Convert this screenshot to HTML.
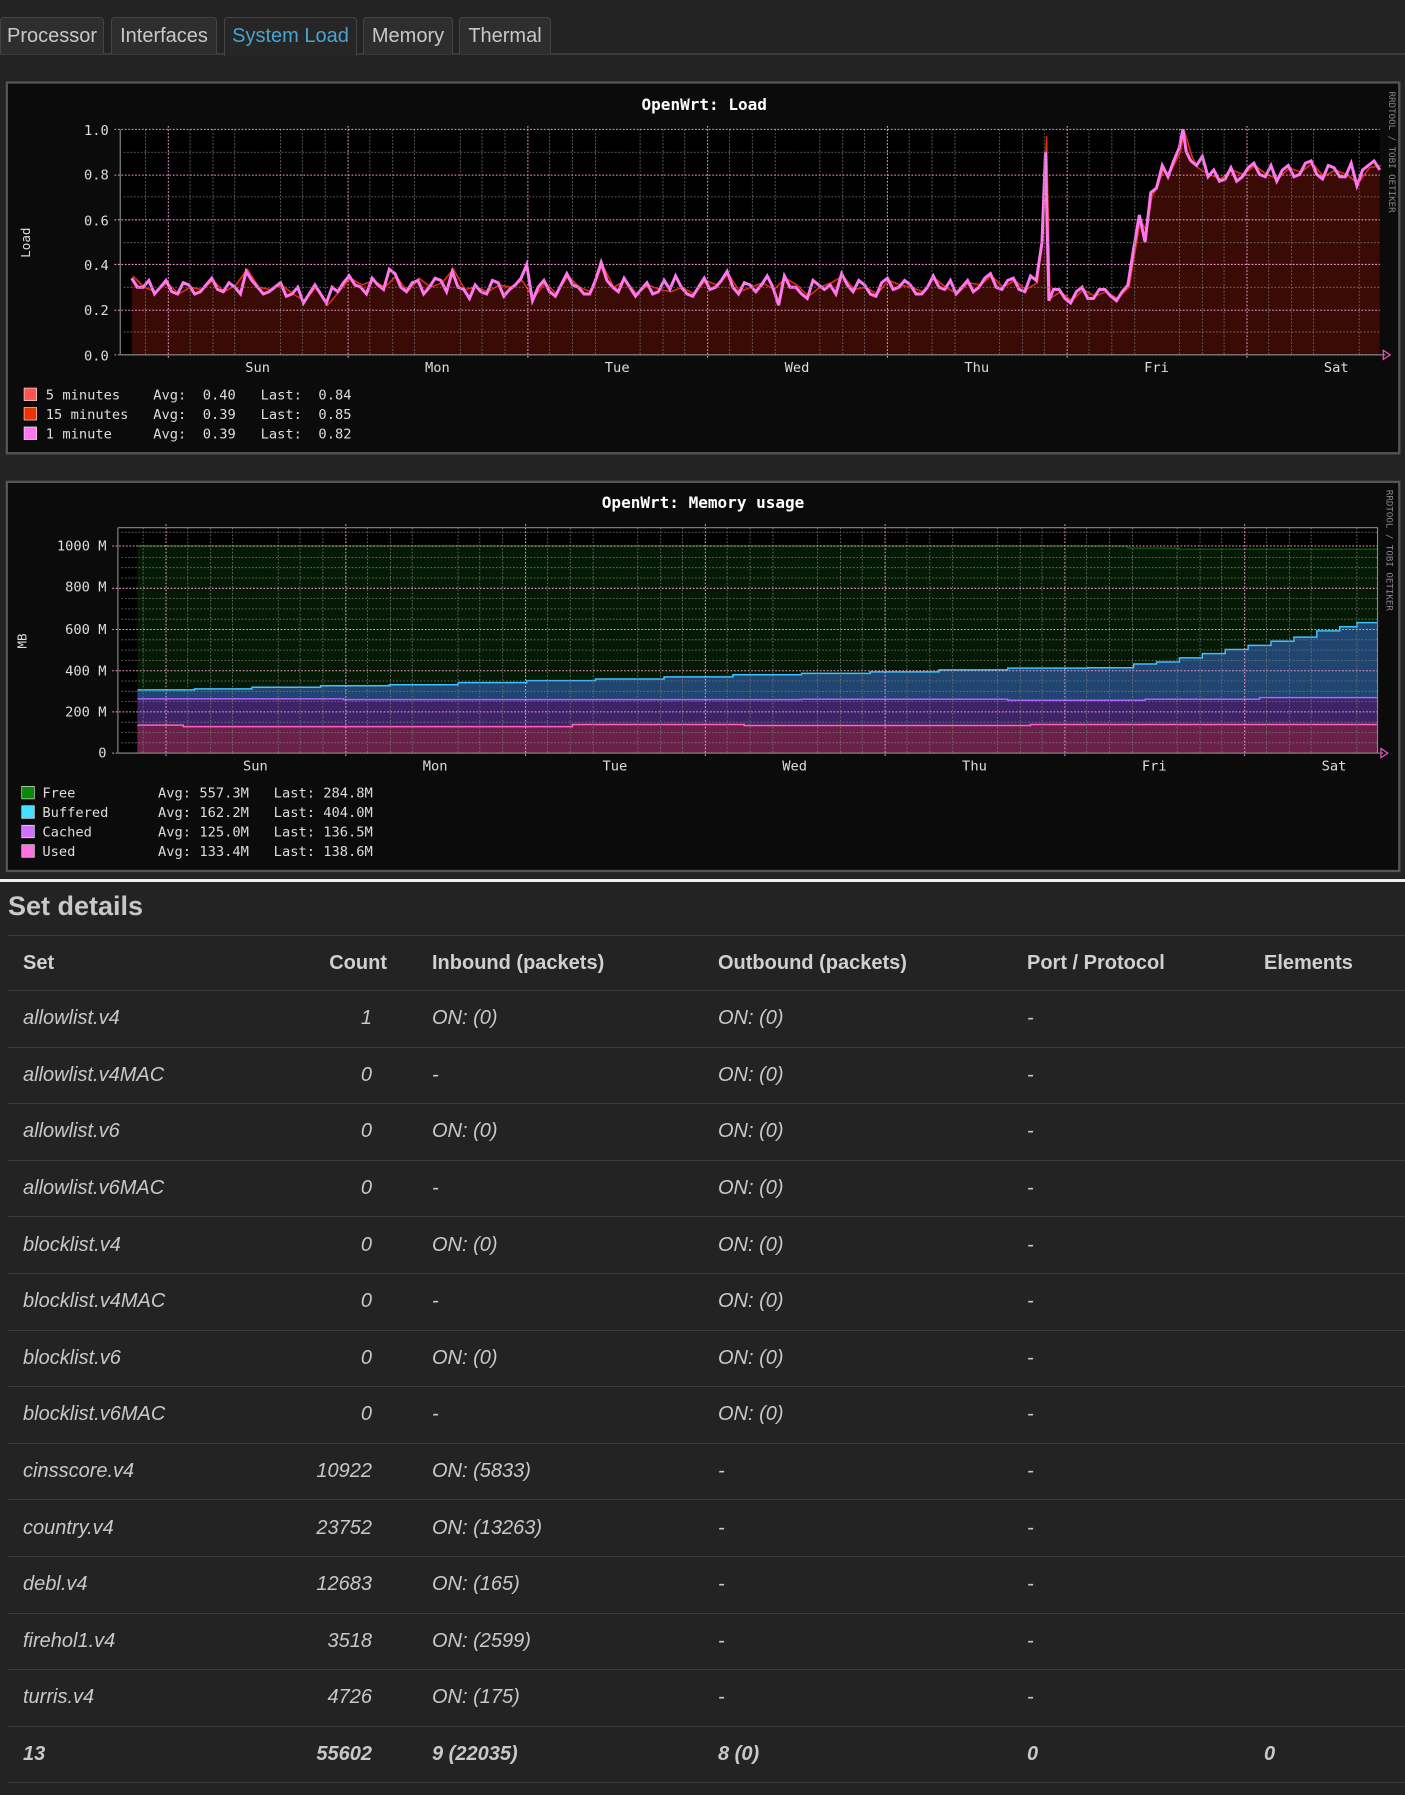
<!DOCTYPE html>
<html><head><meta charset="utf-8"><style>
html,body{margin:0;padding:0;background:#232323;width:1405px;height:1795px;overflow:hidden;font-family:"Liberation Sans",sans-serif}
.tabs{position:absolute;left:0;top:0;width:1405px;height:55px;border-bottom:2px solid #3a3a3a;box-sizing:border-box}
.tab{position:absolute;top:17px;height:37px;background:#2e2e2e;border:1px solid #444;border-bottom:none;border-radius:4px 4px 0 0;color:#c8c8c8;font-size:20px;line-height:36px;text-align:center;box-sizing:border-box}
.tab.a{color:#4aa3d0;background:#262626;height:39px}
svg.g{position:absolute;left:0;top:55px}
svg text{white-space:pre}
.wl{position:absolute;left:0;top:879px;width:1405px;height:3px;background:#eee}
h2{position:absolute;left:8px;top:891px;margin:0;font-size:27px;color:#c8c8c8;font-weight:bold}
table{position:absolute;left:8px;top:935px;width:1397px;border-collapse:collapse;font-size:20px;color:#c8c8c8;table-layout:fixed}
td,th{height:56.6px;border-top:1px solid #3a3a3a;padding:0;box-sizing:border-box;white-space:nowrap}
th{text-align:left;font-weight:bold;color:#d0d0d0;height:55px}
td{font-style:italic}
tr:last-child td{font-weight:bold;border-bottom:1px solid #3a3a3a}
.c1{padding-left:15px}
td.c2{text-align:right;padding-right:23px}
th.c2{text-align:right;padding-right:8px}
.c3{padding-left:37px}
</style></head><body>
<div class="tabs">
<div class="tab" style="left:0;width:104px">Processor</div>
<div class="tab" style="left:111px;width:106px">Interfaces</div>
<div class="tab a" style="left:224px;width:133px">System Load</div>
<div class="tab" style="left:363px;width:90px">Memory</div>
<div class="tab" style="left:459px;width:92px">Thermal</div>
</div>
<svg class="g" width="1405" height="824" viewBox="0 48 1227 720" preserveAspectRatio="none" font-family="DejaVu Sans Mono,Liberation Mono,monospace" font-size="12" xml:space="preserve">
<!-- LOAD -->
<rect x="6" y="72" width="1216" height="324" fill="#0b0b0b" stroke="#555" stroke-width="2"/>
<rect x="105" y="113" width="1100" height="197" fill="#000"/>
<text x="615" y="96" fill="#fff" font-weight="bold" font-size="14" text-anchor="middle">OpenWrt: Load</text>
<text transform="translate(26,212) rotate(-90)" fill="#ddd" font-size="11" text-anchor="middle">Load</text>
<g fill="#ddd" text-anchor="end"><text x="95" y="118">1.0</text><text x="95" y="157">0.8</text><text x="95" y="197">0.6</text><text x="95" y="236">0.4</text><text x="95" y="275">0.2</text><text x="95" y="315">0.0</text></g>
<g fill="#ddd" text-anchor="middle"><text x="225" y="325">Sun</text><text x="382" y="325">Mon</text><text x="539" y="325">Tue</text><text x="696" y="325">Wed</text><text x="853" y="325">Thu</text><text x="1010" y="325">Fri</text><text x="1167" y="325">Sat</text></g>
<path transform="translate(0,310) scale(1,-197)" fill="#3a0a05" d="M115 0 L115 0.35 L125 0.3 L135 0.28 L145 0.32 L155 0.27 L165 0.3 L175 0.29 L185 0.33 L195 0.28 L205 0.31 L215 0.38 L225 0.3 L235 0.29 L245 0.31 L255 0.27 L265 0.24 L275 0.3 L285 0.22 L295 0.28 L305 0.34 L315 0.31 L325 0.33 L335 0.3 L345 0.35 L355 0.28 L365 0.34 L375 0.3 L385 0.32 L395 0.38 L405 0.29 L415 0.3 L425 0.28 L435 0.31 L445 0.3 L455 0.33 L465 0.25 L475 0.32 L485 0.27 L495 0.35 L505 0.3 L515 0.28 L525 0.4 L535 0.3 L545 0.33 L555 0.27 L565 0.31 L575 0.29 L585 0.28 L595 0.3 L605 0.27 L615 0.33 L625 0.31 L635 0.36 L645 0.28 L655 0.3 L665 0.32 L675 0.29 L685 0.34 L695 0.31 L705 0.26 L715 0.3 L725 0.32 L735 0.35 L745 0.29 L755 0.3 L765 0.27 L775 0.33 L785 0.31 L795 0.3 L805 0.28 L815 0.34 L825 0.3 L835 0.27 L845 0.32 L855 0.31 L865 0.35 L875 0.3 L885 0.33 L895 0.29 L905 0.32 L910 0.55 L913 0.95 L916 0.25 L925 0.28 L935 0.24 L945 0.29 L955 0.26 L965 0.28 L975 0.25 L985 0.3 L990 0.45 L995 0.6 L1000 0.55 L1005 0.7 L1010 0.75 L1015 0.82 L1020 0.8 L1025 0.85 L1030 0.9 L1033 1.0 L1040 0.88 L1045 0.83 L1055 0.8 L1065 0.78 L1075 0.82 L1085 0.8 L1095 0.84 L1105 0.8 L1115 0.78 L1125 0.83 L1135 0.81 L1145 0.85 L1155 0.79 L1165 0.82 L1175 0.8 L1185 0.76 L1195 0.83 L1205 0.84 L1205 0 Z"/>
<path transform="translate(1,310) scale(1,-197)" fill="none" stroke="#e03010" stroke-width="1.5" vector-effect="non-scaling-stroke" d="M115 0.35 L125 0.3 L135 0.28 L145 0.32 L155 0.27 L165 0.3 L175 0.29 L185 0.33 L195 0.28 L205 0.31 L215 0.38 L225 0.3 L235 0.29 L245 0.31 L255 0.27 L265 0.24 L275 0.3 L285 0.22 L295 0.28 L305 0.34 L315 0.31 L325 0.33 L335 0.3 L345 0.35 L355 0.28 L365 0.34 L375 0.3 L385 0.32 L395 0.38 L405 0.29 L415 0.3 L425 0.28 L435 0.31 L445 0.3 L455 0.33 L465 0.25 L475 0.32 L485 0.27 L495 0.35 L505 0.3 L515 0.28 L525 0.4 L535 0.3 L545 0.33 L555 0.27 L565 0.31 L575 0.29 L585 0.28 L595 0.3 L605 0.27 L615 0.33 L625 0.31 L635 0.36 L645 0.28 L655 0.3 L665 0.32 L675 0.29 L685 0.34 L695 0.31 L705 0.26 L715 0.3 L725 0.32 L735 0.35 L745 0.29 L755 0.3 L765 0.27 L775 0.33 L785 0.31 L795 0.3 L805 0.28 L815 0.34 L825 0.3 L835 0.27 L845 0.32 L855 0.31 L865 0.35 L875 0.3 L885 0.33 L895 0.29 L905 0.32 L910 0.55 L913 0.97 L916 0.25 L925 0.28 L935 0.24 L945 0.29 L955 0.26 L965 0.28 L975 0.25 L985 0.3 L990 0.45 L995 0.6 L1000 0.55 L1005 0.7 L1010 0.75 L1015 0.82 L1020 0.8 L1025 0.85 L1030 0.9 L1033 1.0 L1040 0.88 L1045 0.83 L1055 0.8 L1065 0.78 L1075 0.82 L1085 0.8 L1095 0.84 L1105 0.8 L1115 0.78 L1125 0.83 L1135 0.81 L1145 0.85 L1155 0.79 L1165 0.82 L1175 0.8 L1185 0.76 L1195 0.83 L1205 0.84"/>
<path transform="translate(0,310) scale(1,-197)" fill="none" stroke="#ff77ee" stroke-width="3" vector-effect="non-scaling-stroke" d="M115 0.34 L120 0.3 L125 0.3 L130 0.33 L135 0.27 L140 0.3 L145 0.33 L150 0.28 L155 0.27 L160 0.32 L165 0.31 L170 0.27 L175 0.28 L180 0.31 L185 0.34 L190 0.29 L195 0.28 L200 0.32 L205 0.3 L210 0.27 L215 0.37 L220 0.33 L225 0.3 L230 0.27 L235 0.28 L240 0.3 L245 0.32 L250 0.26 L255 0.27 L260 0.3 L265 0.23 L270 0.27 L275 0.31 L280 0.27 L285 0.23 L290 0.3 L295 0.28 L300 0.32 L305 0.35 L310 0.31 L315 0.3 L320 0.27 L325 0.34 L330 0.31 L335 0.29 L340 0.38 L345 0.36 L350 0.3 L355 0.28 L360 0.32 L365 0.33 L370 0.27 L375 0.3 L380 0.34 L385 0.33 L390 0.28 L395 0.37 L400 0.3 L405 0.29 L410 0.25 L415 0.31 L420 0.28 L425 0.27 L430 0.33 L435 0.32 L440 0.26 L445 0.29 L450 0.31 L455 0.34 L460 0.4 L465 0.24 L470 0.3 L475 0.33 L480 0.28 L485 0.26 L490 0.31 L495 0.36 L500 0.31 L505 0.3 L510 0.27 L515 0.27 L520 0.33 L525 0.41 L530 0.33 L535 0.3 L540 0.28 L545 0.34 L550 0.3 L555 0.26 L560 0.29 L565 0.32 L570 0.27 L575 0.28 L580 0.33 L585 0.29 L590 0.35 L595 0.3 L600 0.27 L605 0.26 L610 0.3 L615 0.34 L620 0.29 L625 0.3 L630 0.33 L635 0.37 L640 0.3 L645 0.27 L650 0.32 L655 0.31 L660 0.28 L665 0.31 L670 0.35 L675 0.3 L680 0.22 L685 0.35 L690 0.3 L695 0.3 L700 0.27 L705 0.25 L710 0.33 L715 0.31 L720 0.29 L725 0.31 L730 0.27 L735 0.36 L740 0.31 L745 0.28 L750 0.33 L755 0.31 L760 0.27 L765 0.26 L770 0.32 L775 0.34 L780 0.29 L785 0.3 L790 0.33 L795 0.31 L800 0.27 L805 0.27 L810 0.3 L815 0.35 L820 0.3 L825 0.29 L830 0.33 L835 0.27 L840 0.3 L845 0.33 L850 0.28 L855 0.3 L860 0.34 L865 0.36 L870 0.3 L875 0.29 L880 0.33 L885 0.34 L890 0.29 L895 0.28 L900 0.35 L905 0.33 L910 0.5 L913 0.9 L916 0.24 L920 0.29 L925 0.29 L930 0.25 L935 0.23 L940 0.28 L945 0.3 L950 0.25 L955 0.25 L960 0.29 L965 0.29 L970 0.26 L975 0.24 L980 0.28 L985 0.31 L990 0.47 L995 0.62 L1000 0.5 L1005 0.72 L1010 0.74 L1015 0.84 L1020 0.79 L1025 0.86 L1030 0.92 L1033 1.0 L1036 0.9 L1040 0.86 L1045 0.84 L1050 0.88 L1055 0.79 L1060 0.82 L1065 0.77 L1070 0.78 L1075 0.83 L1080 0.77 L1085 0.79 L1090 0.83 L1095 0.85 L1100 0.8 L1105 0.79 L1110 0.84 L1115 0.77 L1120 0.82 L1125 0.84 L1130 0.79 L1135 0.8 L1140 0.85 L1145 0.86 L1150 0.8 L1155 0.78 L1160 0.84 L1165 0.83 L1170 0.79 L1175 0.79 L1180 0.85 L1185 0.75 L1190 0.82 L1195 0.84 L1200 0.86 L1205 0.82"/>
<g stroke="#777" stroke-width="0.7" stroke-dasharray="1.5 1.5">
<path d="M108 133H1205M108 172H1205M108 212H1205M108 251H1205M108 290H1205"/>
<path d="M127 113V310M166 113V310M186 113V310M205 113V310M245 113V310M264 113V310M284 113V310M323 113V310M343 113V310M362 113V310M402 113V310M421 113V310M441 113V310M480 113V310M500 113V310M520 113V310M559 113V310M579 113V310M598 113V310M637 113V310M657 113V310M677 113V310M716 113V310M736 113V310M755 113V310M794 113V310M814 113V310M834 113V310M873 113V310M893 113V310M912 113V310M951 113V310M971 113V310M991 113V310M1030 113V310M1050 113V310M1069 113V310M1108 113V310M1128 113V310M1147 113V310M1187 113V310"/>
</g>
<g stroke="#f09ad0" stroke-width="0.9" stroke-dasharray="1.5 1.5">
<path d="M100 113H1205M100 153H1205M100 192H1205M100 231H1205M100 271H1205M100 310H1205"/>
<path d="M147 110V313M304 110V313M461 110V313M618 110V313M775 110V313M932 110V313M1089 110V313"/>
</g>
<path d="M105 113V310M105 310H1210" stroke="#888" fill="none"/>
<path d="M1208 306l6 4-6 4z" fill="none" stroke="#ff55cc"/>
<text transform="translate(1213,80) rotate(90)" fill="#888" font-size="8">RRDTOOL / TOBI OETIKER</text>
<g font-size="12" fill="#ddd">
<rect x="21" y="339" width="11" height="11" fill="#ff5555" stroke="#fff" stroke-width=".5"/><text x="40" y="349">5 minutes    Avg:  0.40   Last:  0.84</text>
<rect x="21" y="356" width="11" height="11" fill="#ee3300" stroke="#fff" stroke-width=".5"/><text x="40" y="366">15 minutes   Avg:  0.39   Last:  0.85</text>
<rect x="21" y="373" width="11" height="11" fill="#ff77ee" stroke="#fff" stroke-width=".5"/><text x="40" y="383">1 minute     Avg:  0.39   Last:  0.82</text>
</g>
<!-- MEMORY -->
<rect x="6" y="421" width="1216" height="340" fill="#0b0b0b" stroke="#555" stroke-width="2"/>
<rect x="103" y="461" width="1100" height="197" fill="#000"/>
<text x="614" y="444" fill="#fff" font-weight="bold" font-size="14" text-anchor="middle">OpenWrt: Memory usage</text>
<text transform="translate(23,560) rotate(-90)" fill="#ddd" font-size="11" text-anchor="middle">MB</text>
<g fill="#ddd" text-anchor="end"><text x="93" y="481">1000 M</text><text x="93" y="517">800 M</text><text x="93" y="554">600 M</text><text x="93" y="590">400 M</text><text x="93" y="626">200 M</text><text x="93" y="662">0</text></g>
<g fill="#ddd" text-anchor="middle"><text x="223" y="673">Sun</text><text x="380" y="673">Mon</text><text x="537" y="673">Tue</text><text x="694" y="673">Wed</text><text x="851" y="673">Thu</text><text x="1008" y="673">Fri</text><text x="1165" y="673">Sat</text></g>
<g transform="translate(0,658) scale(1,-0.181)">
<path fill="#041a04" d="M120 0V1000H985V990H1030V985H1203V0Z"/>
<path d="M120 1000H985V990H1030V985H1203" fill="none" stroke="#0a6a0a" stroke-width="1.2" vector-effect="non-scaling-stroke"/>
<path fill="#1f4570" d="M120 0V305H170V310H220V318H280V325H340V330H400V340H460V350H520V358H580V368H640V378H700V385H760V392H820V402H880V410H950V412H990V430H1010V440H1030V460H1050V480H1070V500H1090V520H1110V540H1130V560H1150V590H1170V610H1185V630H1203V0Z"/>
<path fill="none" stroke="#40c0ff" stroke-width="1.5" vector-effect="non-scaling-stroke" d="M120 305H170V310H220V318H280V325H340V330H400V340H460V350H520V358H580V368H640V378H700V385H760V392H820V402H880V410H950V412H990V430H1010V440H1030V460H1050V480H1070V500H1090V520H1110V540H1130V560H1150V590H1170V610H1185V630H1203"/>
<path fill="#3d2466" d="M120 0V262H300V258H700V260H880V255H1000V260H1100V268H1203V0Z"/>
<path fill="none" stroke="#b060ff" stroke-width="1.5" vector-effect="non-scaling-stroke" d="M120 262H300V258H700V260H880V255H1000V260H1100V268H1203"/>
<path fill="#6a2048" d="M120 0V135H160V128H500V138H650V133H900V138H1203V0Z"/>
<path fill="none" stroke="#ff60c0" stroke-width="1.5" vector-effect="non-scaling-stroke" d="M120 135H160V128H500V138H650V133H900V138H1203"/>
</g>
<g stroke="#777" stroke-width="0.7" stroke-dasharray="1.5 1.5">
<path d="M106 465H1203M106 487H1203M106 496H1203M106 505H1203M106 523H1203M106 532H1203M106 541H1203M106 559H1203M106 568H1203M106 577H1203M106 595H1203M106 604H1203M106 613H1203M106 631H1203M106 640H1203M106 649H1203"/>
<path d="M125 461V658M164 461V658M184 461V658M203 461V658M243 461V658M262 461V658M282 461V658M321 461V658M341 461V658M360 461V658M400 461V658M419 461V658M439 461V658M478 461V658M498 461V658M518 461V658M557 461V658M577 461V658M596 461V658M635 461V658M655 461V658M675 461V658M714 461V658M734 461V658M753 461V658M792 461V658M812 461V658M832 461V658M871 461V658M891 461V658M910 461V658M949 461V658M969 461V658M989 461V658M1028 461V658M1048 461V658M1067 461V658M1106 461V658M1126 461V658M1145 461V658M1185 461V658"/>
</g>
<g stroke="#f09ad0" stroke-width="0.9" stroke-dasharray="1.5 1.5">
<path d="M98 477H1203M98 514H1203M98 550H1203M98 586H1203M98 622H1203M98 658H1203"/>
<path d="M145 458V661M302 458V661M459 458V661M616 458V661M773 458V661M930 458V661M1087 458V661"/>
</g>
<path d="M103 461V658M103 658H1208M103 461H1203V658" stroke="#888" fill="none"/>
<path d="M1206 654l6 4-6 4z" fill="none" stroke="#ff55cc"/>
<text transform="translate(1211,428) rotate(90)" fill="#888" font-size="8">RRDTOOL / TOBI OETIKER</text>
<g font-size="12" fill="#ddd">
<rect x="19" y="687" width="11" height="11" fill="#0a8a0a" stroke="#fff" stroke-width=".5"/><text x="37" y="697">Free          Avg: 557.3M   Last: 284.8M</text>
<rect x="19" y="704" width="11" height="11" fill="#40e0ff" stroke="#fff" stroke-width=".5"/><text x="37" y="714">Buffered      Avg: 162.2M   Last: 404.0M</text>
<rect x="19" y="721" width="11" height="11" fill="#d070ff" stroke="#fff" stroke-width=".5"/><text x="37" y="731">Cached        Avg: 125.0M   Last: 136.5M</text>
<rect x="19" y="738" width="11" height="11" fill="#ff70e0" stroke="#fff" stroke-width=".5"/><text x="37" y="748">Used          Avg: 133.4M   Last: 138.6M</text>
</g>
</svg>
<div class="wl"></div>
<h2>Set details</h2>
<table>
<colgroup><col style="width:230px"><col style="width:157px"><col style="width:323px"><col style="width:309px"><col style="width:237px"><col></colgroup>
<tr><th class="c1">Set</th><th class="c2">Count</th><th class="c3">Inbound (packets)</th><th>Outbound (packets)</th><th>Port / Protocol</th><th>Elements</th></tr>
<tr><td class="c1">allowlist.v4</td><td class="c2">1</td><td class="c3">ON: (0)</td><td>ON: (0)</td><td>-</td><td></td></tr>
<tr><td class="c1">allowlist.v4MAC</td><td class="c2">0</td><td class="c3">-</td><td>ON: (0)</td><td>-</td><td></td></tr>
<tr><td class="c1">allowlist.v6</td><td class="c2">0</td><td class="c3">ON: (0)</td><td>ON: (0)</td><td>-</td><td></td></tr>
<tr><td class="c1">allowlist.v6MAC</td><td class="c2">0</td><td class="c3">-</td><td>ON: (0)</td><td>-</td><td></td></tr>
<tr><td class="c1">blocklist.v4</td><td class="c2">0</td><td class="c3">ON: (0)</td><td>ON: (0)</td><td>-</td><td></td></tr>
<tr><td class="c1">blocklist.v4MAC</td><td class="c2">0</td><td class="c3">-</td><td>ON: (0)</td><td>-</td><td></td></tr>
<tr><td class="c1">blocklist.v6</td><td class="c2">0</td><td class="c3">ON: (0)</td><td>ON: (0)</td><td>-</td><td></td></tr>
<tr><td class="c1">blocklist.v6MAC</td><td class="c2">0</td><td class="c3">-</td><td>ON: (0)</td><td>-</td><td></td></tr>
<tr><td class="c1">cinsscore.v4</td><td class="c2">10922</td><td class="c3">ON: (5833)</td><td>-</td><td>-</td><td></td></tr>
<tr><td class="c1">country.v4</td><td class="c2">23752</td><td class="c3">ON: (13263)</td><td>-</td><td>-</td><td></td></tr>
<tr><td class="c1">debl.v4</td><td class="c2">12683</td><td class="c3">ON: (165)</td><td>-</td><td>-</td><td></td></tr>
<tr><td class="c1">firehol1.v4</td><td class="c2">3518</td><td class="c3">ON: (2599)</td><td>-</td><td>-</td><td></td></tr>
<tr><td class="c1">turris.v4</td><td class="c2">4726</td><td class="c3">ON: (175)</td><td>-</td><td>-</td><td></td></tr>
<tr><td class="c1">13</td><td class="c2">55602</td><td class="c3">9 (22035)</td><td>8 (0)</td><td>0</td><td>0</td></tr>
</table>
</body></html>
